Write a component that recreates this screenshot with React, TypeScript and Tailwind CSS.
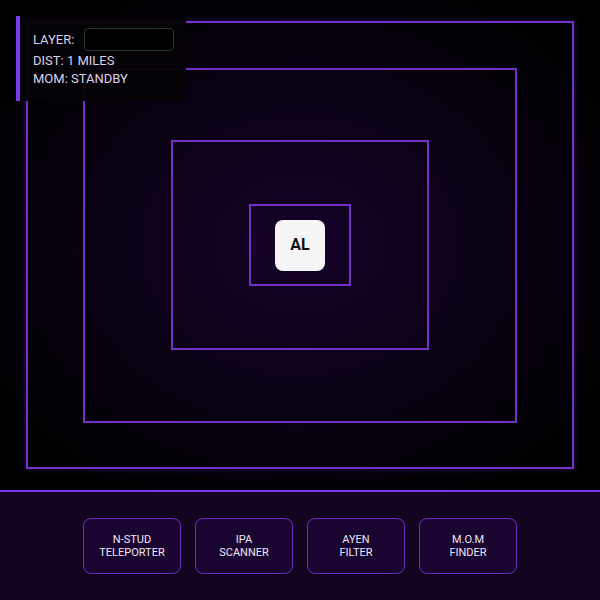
import React from 'react';

const tools = [
  ['N-STUD', 'TELEPORTER'],
  ['IPA', 'SCANNER'],
  ['AYEN', 'FILTER'],
  ['M.O.M', 'FINDER'],
];

export default function App() {
  return (
    <div className="w-[600px] h-[600px] flex flex-col bg-black font-['Roboto',sans-serif] overflow-hidden">
      <div className="relative h-[490px] flex items-center justify-center bg-[radial-gradient(ellipse_at_center,#16032a_0%,#0b0214_45%,#000000_85%)]">
        <div className="w-[548px] h-[448px] border-2 border-[#7431c9] flex items-center justify-center shadow-[0_0_6px_rgba(124,58,237,0.35)]">
          <div className="w-[434px] h-[355px] border-2 border-[#7431c9] flex items-center justify-center">
            <div className="w-[258px] h-[210px] border-2 border-[#7431c9] flex items-center justify-center">
              <div className="w-[102px] h-[82px] border-2 border-[#7431c9] flex items-center justify-center">
                <div className="w-[50px] h-[51px] rounded-lg bg-[#f5f5f5] flex items-center justify-center text-[16px] font-bold text-[#111]">
                  AL
                </div>
              </div>
            </div>
          </div>
        </div>

        <div className="absolute left-4 top-4 w-[170px] h-[85px] bg-[#050208]/95 border-l-4 border-[#7c3aed] pl-[13px] pt-[12px] text-[13px] leading-[18px] text-[#d9d2e9]">
          <div className="flex items-center gap-[10px]">
            <span>LAYER:</span>
            <div className="w-[90px] h-[23px] rounded-[4px] border border-[#1f3a2b] bg-black" />
          </div>
          <div className="mt-[1px]">DIST: 1 MILES</div>
          <div>MOM: STANDBY</div>
        </div>
      </div>

      <div className="flex-1 border-t-2 border-[#7c3aed] bg-[#12031f] flex items-center justify-center gap-[14px]">
        {tools.map(([a, b]) => (
          <button
            key={a}
            className="w-[98px] h-[56px] rounded-lg border border-[#6a2bbf] bg-[#1a0530] text-[11px] leading-[13px] text-[#ece6f5] flex flex-col items-center justify-center"
          >
            <span>{a}</span>
            <span>{b}</span>
          </button>
        ))}
      </div>
    </div>
  );
}
